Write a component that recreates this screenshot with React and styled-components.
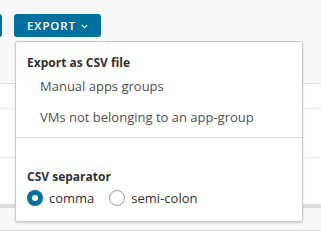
import React from "react";
import styled, { createGlobalStyle } from "styled-components";

const Global = createGlobalStyle`
  html, body { margin: 0; padding: 0; }
  body {
    background: #ffffff;
    font-family: "Open Sans", "Liberation Sans", sans-serif;
    overflow: hidden;
    width: 321px;
    height: 247px;
  }
`;

const Page = styled.div`
  position: relative;
  display: flex;
  flex-direction: column;
  width: 321px;
  height: 247px;
  background: #ffffff;
`;

const Toolbar = styled.div`
  display: flex;
  align-items: flex-start;
  gap: 12px;
  padding-top: 14px;
  margin-left: -60px;
  background: #f7f7f7;
`;

const Button = styled.button`
  display: flex;
  align-items: center;
  justify-content: center;
  gap: 5px;
  height: 23px;
  width: ${(p) => p.$w}px;
  padding: 0;
  border: none;
  border-radius: 3px;
  background: #00709e;
  color: #ffffff;
  font-family: "Open Sans", "Liberation Sans", sans-serif;
  font-size: 11.5px;
  font-weight: 600;
  letter-spacing: 0.9px;
  text-transform: uppercase;
  cursor: pointer;
`;

const Band = styled.div`
  height: ${(p) => p.$h}px;
  flex: 0 0 auto;
  background: ${(p) => p.$bg};
  border-bottom: ${(p) => (p.$line ? `1px solid ${p.$line}` : "none")};
`;

const Menu = styled.div`
  position: absolute;
  top: 41px;
  left: 15px;
  width: 288px;
  height: 181px;
  box-sizing: border-box;
  padding-top: 12px;
  background: #ffffff;
  border: 1px solid #cccccc;
  border-radius: 3px;
  box-shadow: 0 1px 2px rgba(0, 0, 0, 0.18);
  display: flex;
  flex-direction: column;
`;

const Header = styled.div`
  padding-left: 11px;
  height: 18px;
  line-height: 18px;
  font-size: 12px;
  font-weight: 700;
  color: #313131;
`;

const Item = styled.div`
  padding-left: 24px;
  height: 31px;
  line-height: 29px;
  font-size: 13px;
  color: #4f4f4f;
  white-space: nowrap;
`;

const Divider = styled.div`
  height: 1px;
  margin: 3px 0 30px;
  background: #dddddd;
`;

const RadioRow = styled.div`
  display: flex;
  align-items: center;
  padding-left: 11px;
  margin-top: 3px;
  height: 18px;
`;

const RadioLabel = styled.label`
  display: flex;
  align-items: center;
  gap: 6px;
  margin-right: 15px;
  font-size: 13px;
  color: #313131;
`;

const RadioDot = styled.span`
  box-sizing: border-box;
  width: 16px;
  height: 16px;
  border-radius: 50%;
  background: ${(p) => (p.$on ? "#00709e" : "#ffffff")};
  border: ${(p) => (p.$on ? "none" : "1px solid #9a9a9a")};
  display: flex;
  align-items: center;
  justify-content: center;
  &::after {
    content: "";
    display: ${(p) => (p.$on ? "block" : "none")};
    width: 6px;
    height: 6px;
    border-radius: 50%;
    background: #ffffff;
  }
`;

const Chevron = () => (
  <svg width="7" height="5" viewBox="0 0 7 5" style={{ marginTop: 1 }}>
    <path d="M0.8 1 L3.5 3.7 L6.2 1" fill="none" stroke="#ffffff" strokeWidth="1.1" />
  </svg>
);

export default function App() {
  return (
    <>
      <Global />
      <Page>
        <Toolbar>
          <Button $w={62} aria-label="Add" />
          <Button $w={87}>
            Export <Chevron />
          </Button>
        </Toolbar>
        <Band $h={46} $bg="#f7f7f7" $line="#dddddd" />
        <Band $h={24} $bg="#ffffff" $line="#e8e8e8" />
        <Band $h={48} $bg="#ffffff" $line="#e8e8e8" />
        <Band $h={46} $bg="#ffffff" />
        <Band $h={4} $bg="#dddddd" />
        <Band $h={22} $bg="#f7f7f7" $line="#dddddd" />
        <Menu>
          <Header>Export as CSV file</Header>
          <Item>Manual apps groups</Item>
          <Item>VMs not belonging to an app-group</Item>
          <Divider />
          <Header>CSV separator</Header>
          <RadioRow>
            <RadioLabel>
              <RadioDot $on />
              comma
            </RadioLabel>
            <RadioLabel>
              <RadioDot />
              semi-colon
            </RadioLabel>
          </RadioRow>
        </Menu>
      </Page>
    </>
  );
}
